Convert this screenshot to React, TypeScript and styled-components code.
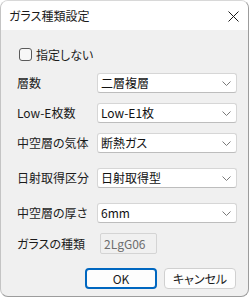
import React from "react";
import styled, { createGlobalStyle } from "styled-components";

const GlobalStyle = createGlobalStyle`
  html, body {
    margin: 0;
    padding: 0;
    background: #ffffff;
  }
  body {
    font-family: "Noto Sans CJK JP", "Noto Sans", sans-serif;
    font-size: 12px;
    font-feature-settings: "palt";
    color: #1b1b1b;
  }
`;

interface FieldProps {
  label: string;
  value: string;
  top: number;
  readOnly?: boolean;
}

function Chevron() {
  return (
    <svg width="9" height="5" viewBox="0 0 9 5">
      <path d="M0.5 0.5 L4.5 4.5 L8.5 0.5" fill="none" stroke="#7a7a7a" strokeWidth="1" />
    </svg>
  );
}

function CloseIcon() {
  return (
    <svg width="11" height="11" viewBox="0 0 11 11">
      <path d="M0.5 0.5 L10.5 10.5 M10.5 0.5 L0.5 10.5" stroke="#1b1b1b" strokeWidth="1" />
    </svg>
  );
}

function Field({ label, value, top, readOnly }: FieldProps) {
  return (
    <FieldRow $top={top}>
      <Label>{label}</Label>
      {readOnly ? (
        <ReadOnlyBox>{value}</ReadOnlyBox>
      ) : (
        <SelectBox>
          <span>{value}</span>
          <Chevron />
        </SelectBox>
      )}
    </FieldRow>
  );
}

function App() {
  return (
    <>
      <GlobalStyle />
      <Window>
        <TitleBar>
          <Title>ガラス種類設定</Title>
          <CloseButton>
            <CloseIcon />
          </CloseButton>
        </TitleBar>
        <Body>
          <CheckRow>
            <CheckBox />
            <span>指定しない</span>
          </CheckRow>
          <Field label="層数" value="二層複層" top={12} />
          <Field label="Low-E枚数" value="Low-E1枚" top={10} />
          <Field label="中空層の気体" value="断熱ガス" top={10} />
          <Field label="日射取得区分" value="日射取得型" top={15} />
          <Field label="中空層の厚さ" value="6mm" top={15} />
          <Field label="ガラスの種類" value="2LgG06" top={10} readOnly />
          <ButtonRow>
            <DialogButton $primary>OK</DialogButton>
            <DialogButton>キャンセル</DialogButton>
          </ButtonRow>
        </Body>
      </Window>
    </>
  );
}

const Window = styled.div`
  width: 249px;
  height: 297px;
  box-sizing: border-box;
  border: 1px solid #9c9c9c;
  border-top-color: #d8d8d8;
  border-left-color: #c4c4c4;
  border-radius: 8px;
  overflow: hidden;
  display: flex;
  flex-direction: column;
  background: #f0f0f0;
`;

const TitleBar = styled.div`
  height: 29px;
  flex-shrink: 0;
  background: #ffffff;
  display: flex;
  align-items: center;
  justify-content: space-between;
  padding: 0 9px 0 8px;
`;

const Title = styled.div`
  font-size: 12px;
  line-height: 14px;
  color: #1b1b1b;
  margin-top: 1px;
`;

const CloseButton = styled.div`
  display: flex;
  align-items: center;
  margin-top: 2px;
`;

const Body = styled.div`
  flex: 1;
  display: flex;
  flex-direction: column;
  padding: 18px 0 0 16px;
`;

const CheckRow = styled.div`
  display: flex;
  align-items: center;
  gap: 4px;
  margin-left: 2px;
  height: 13px;
  line-height: 13px;
  font-size: 12px;
`;

const CheckBox = styled.div`
  width: 13px;
  height: 13px;
  box-sizing: border-box;
  border: 1px solid #5a5a5a;
  border-radius: 3px;
  background: #f7f7f7;
`;

const FieldRow = styled.div<{ $top: number }>`
  display: grid;
  grid-template-columns: 80px 140px;
  align-items: center;
  height: 20px;
  margin-top: ${(props) => props.$top}px;
`;

const Label = styled.div`
  font-size: 12px;
  line-height: 20px;
  white-space: nowrap;
  color: #1b1b1b;
`;

const SelectBox = styled.div`
  height: 20px;
  box-sizing: border-box;
  border: 1px solid #d6d6d6;
  border-bottom-color: #bdbdbd;
  border-radius: 3px;
  background: #ffffff;
  display: flex;
  align-items: center;
  justify-content: space-between;
  padding: 0 5px 0 3px;
  font-size: 12px;
  line-height: 18px;
  color: #111111;
`;

const ReadOnlyBox = styled.div`
  width: 57px;
  height: 21px;
  margin-left: 3px;
  box-sizing: border-box;
  border: 1px solid #d4d4d4;
  border-radius: 2px;
  background: #f0f0f0;
  display: flex;
  align-items: center;
  padding-left: 3px;
  font-size: 12px;
  line-height: 19px;
  color: #6d6d6d;
`;

const ButtonRow = styled.div`
  display: flex;
  gap: 7px;
  margin-top: 15px;
  margin-left: 68px;
`;

const DialogButton = styled.div<{ $primary?: boolean }>`
  width: 72px;
  height: 21px;
  box-sizing: border-box;
  border-radius: 4px;
  border: ${(props) => (props.$primary ? "2px solid #0067c0" : "1px solid #d0d0d0")};
  background: #fdfdfd;
  display: flex;
  align-items: center;
  justify-content: center;
  font-size: 12px;
  line-height: 17px;
  color: #1b1b1b;
`;

export default App;
